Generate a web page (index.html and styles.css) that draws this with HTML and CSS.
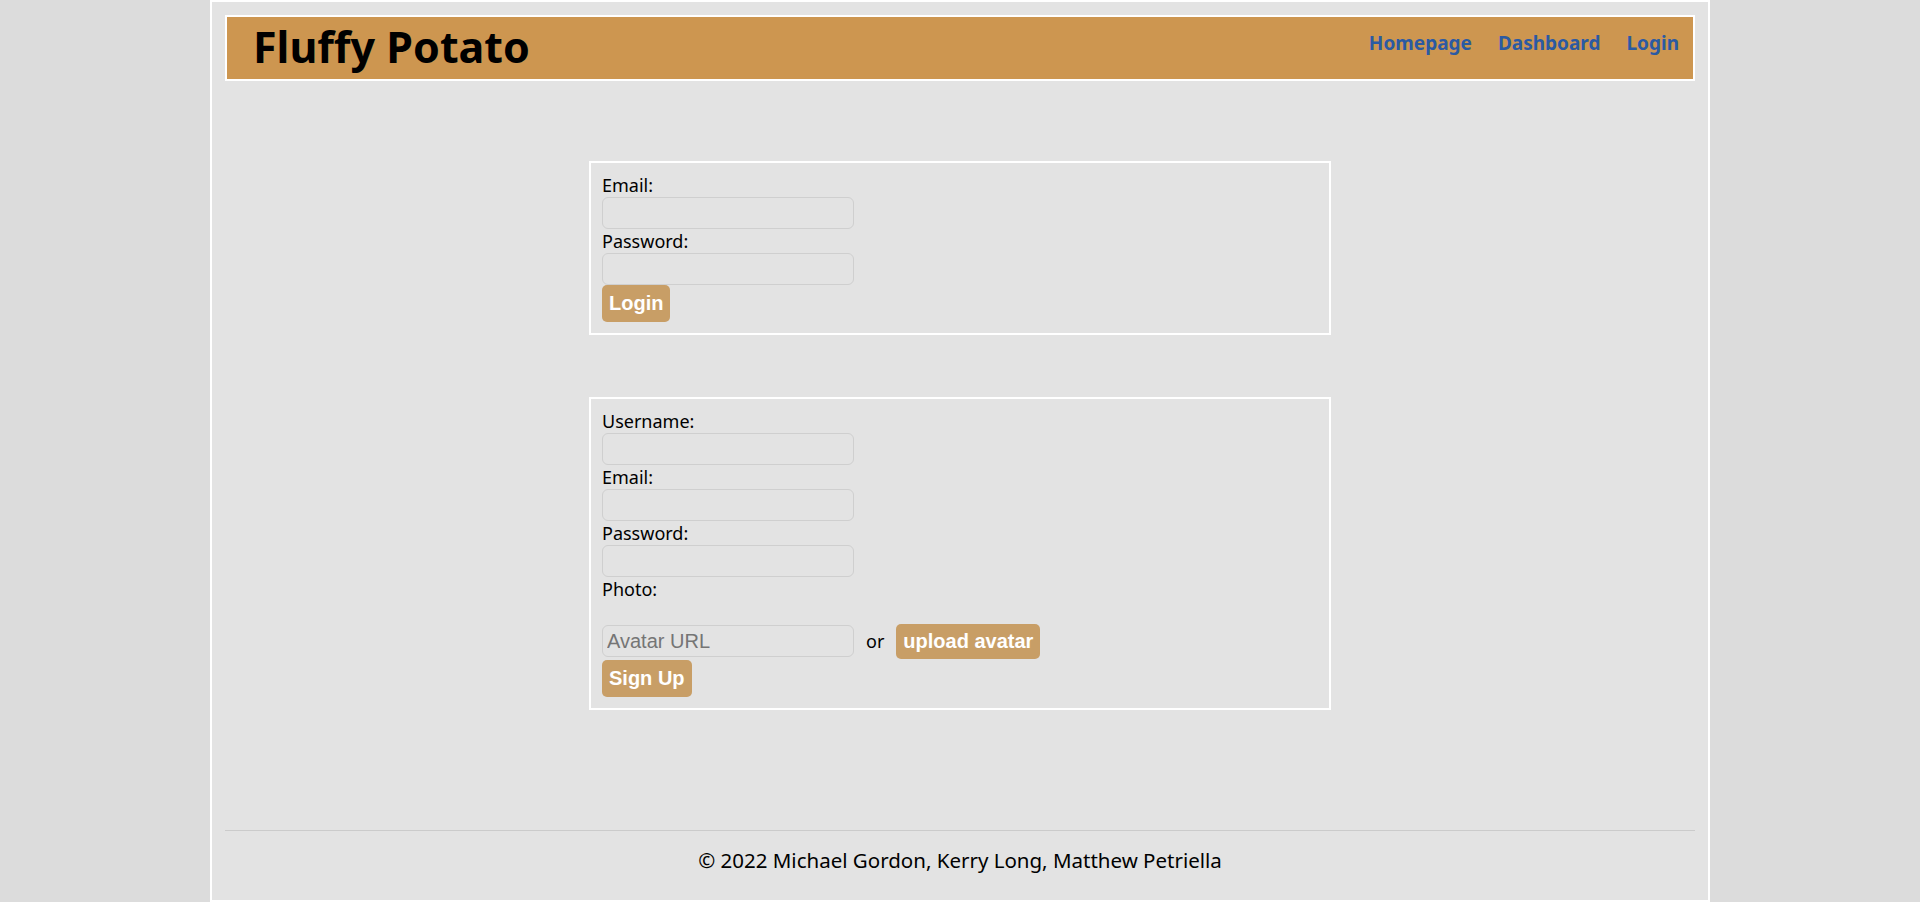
FILE: index.html
```html
<!DOCTYPE html>
<html lang="en">
<head>
<meta charset="utf-8">
<title>Fluffy Potato</title>
<link rel="stylesheet" href="styles.css">
</head>
<body>
<div class="page">
  <header class="site-header">
    <h1 class="brand">Fluffy Potato</h1>
    <nav class="nav">
      <a href="#" class="nav-link">Homepage</a>
      <a href="#" class="nav-link">Dashboard</a>
      <a href="#" class="nav-link">Login</a>
    </nav>
  </header>
  <main class="main">
    <form class="form-box">
      <label class="field-label">Email:</label>
      <input class="field-input" type="text">
      <label class="field-label">Password:</label>
      <input class="field-input" type="password">
      <button class="btn" type="button">Login</button>
    </form>
    <form class="form-box">
      <label class="field-label">Username:</label>
      <input class="field-input" type="text">
      <label class="field-label">Email:</label>
      <input class="field-input" type="text">
      <label class="field-label">Password:</label>
      <input class="field-input" type="password">
      <label class="field-label">Photo:</label>
      <div class="photo-row">
        <input class="field-input" type="text" placeholder="Avatar URL">
        <span class="or">or</span>
        <button class="btn btn-upload" type="button">upload avatar</button>
      </div>
      <button class="btn" type="button">Sign Up</button>
    </form>
  </main>
  <footer class="site-footer">
    <p class="copyright">© 2022 Michael Gordon, Kerry Long, Matthew Petriella</p>
  </footer>
</div>
</body>
</html>
```
FILE: styles.css
```css
* { box-sizing: border-box; }

html, body {
  margin: 0;
  padding: 0;
}

body {
  background: #dcdcdc;
  font-family: "Noto Sans", "Open Sans", sans-serif;
  color: #000;
}

.page {
  width: 1500px;
  margin: 0 auto;
  min-height: 902px;
  background: #e3e3e3;
  border: 2px solid #fff;
  padding: 13px 13px 0;
}

.site-header {
  height: 66px;
  background: #cd9650;
  border: 2px solid #fff;
  display: flex;
  justify-content: space-between;
  align-items: center;
  padding: 0 14px 0 26px;
}

.brand {
  margin: 0 0 2px;
  font-size: 43px;
  font-weight: 700;
  line-height: 58px;
}

.nav {
  display: flex;
  gap: 26px;
  margin-top: -10px;
}

.nav-link {
  color: #2b5aa3;
  font-weight: 700;
  font-size: 19px;
  text-decoration: none;
}

.main {
  padding-top: 80px;
  display: flex;
  flex-direction: column;
  gap: 62px;
}

.form-box {
  width: 742px;
  margin: 0 auto;
  border: 2px solid #fff;
  padding: 10px 11px 11px;
  display: flex;
  flex-direction: column;
  align-items: flex-start;
}

.field-label {
  display: block;
  font-size: 18px;
  line-height: 24px;
}

.field-input {
  width: 252px;
  height: 32px;
  margin: 0;
  padding: 0 4px;
  border: 1px solid #cfcfcf;
  border-radius: 6px;
  background: transparent;
  font-family: "Liberation Sans", Arial, sans-serif;
  font-size: 20px;
}

.field-input::placeholder {
  color: #757575;
}

.btn {
  margin: 0;
  padding: 7px;
  border: none;
  border-radius: 5px;
  background: #c89e66;
  color: #fff;
  font-family: "Liberation Sans", Arial, sans-serif;
  font-weight: 700;
  font-size: 20px;
  line-height: 23px;
}

.photo-row {
  margin-top: 22px;
  display: flex;
  align-items: center;
  gap: 12px;
  height: 36px;
  margin-bottom: 1px;
}

.btn-upload {
  padding: 6px 7px;
}

.or {
  font-size: 18px;
}

.site-footer {
  margin-top: 120px;
  border-top: 1px solid #cbcbcb;
  text-align: center;
}

.copyright {
  margin: 0;
  padding-top: 16px;
  font-size: 20.5px;
  line-height: 26px;
}
```
